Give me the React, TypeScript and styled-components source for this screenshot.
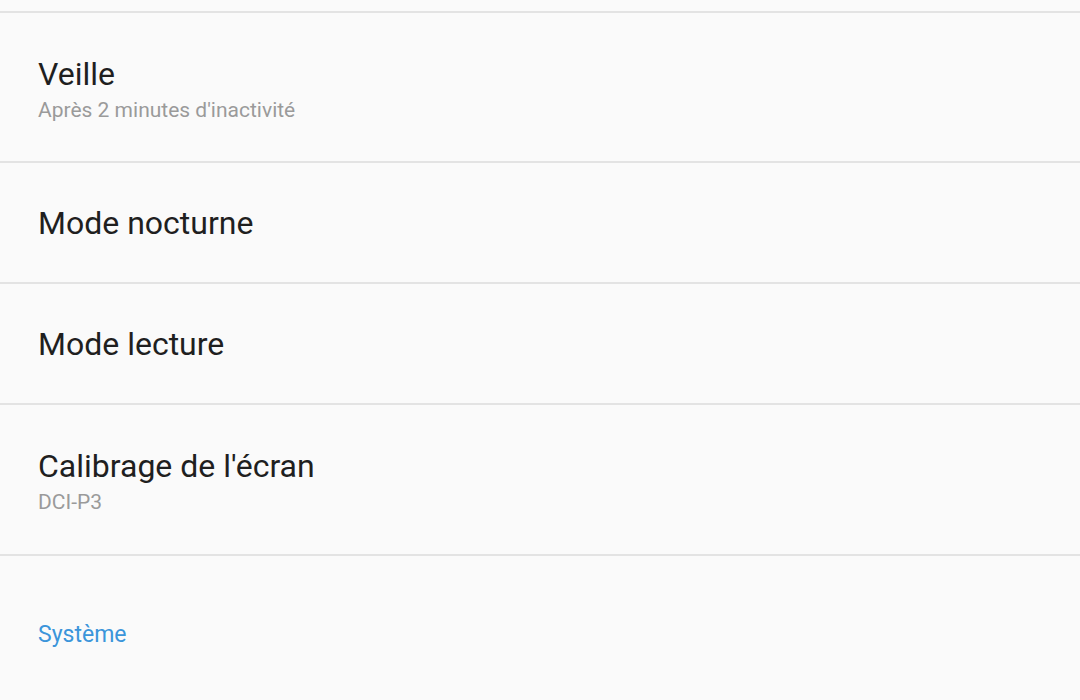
import React from "react";
import styled, { createGlobalStyle } from "styled-components";

const Global = createGlobalStyle`
  html, body {
    margin: 0;
    padding: 0;
    background: #fafafa;
  }
  body {
    font-family: Roboto, "Noto Sans", "Liberation Sans", sans-serif;
    -webkit-font-smoothing: antialiased;
  }
`;

const Page = styled.div`
  width: 1080px;
  height: 700px;
  overflow: hidden;
  background: #fafafa;
  display: flex;
  flex-direction: column;
`;

const TopSpacer = styled.div`
  height: 11px;
`;

const Divider = styled.div`
  height: 2px;
  background: #e3e3e3;
  flex-shrink: 0;
`;

const Row = styled.div<{ $h: number; $twoLine: boolean }>`
  height: ${(p) => p.$h}px;
  flex-shrink: 0;
  box-sizing: border-box;
  padding: ${(p) => (p.$twoLine ? "3px" : "1px")} 38px 0;
  display: flex;
  flex-direction: column;
  justify-content: center;
`;

const Title = styled.div`
  font-size: 32px;
  line-height: 38px;
  color: #1f1f1f;
`;

const Summary = styled.div`
  margin-top: 4px;
  font-size: 21px;
  line-height: 26px;
  color: #9a9a9a;
`;

const SectionHeader = styled.div`
  padding: 65px 38px 0;
  font-size: 23px;
  line-height: 28px;
  color: #3b95da;
`;

const items: { title: string; summary?: string; h: number }[] = [
  { title: "Veille", summary: "Après 2 minutes d'inactivité", h: 148 },
  { title: "Mode nocturne", h: 119 },
  { title: "Mode lecture", h: 119 },
  { title: "Calibrage de l'écran", summary: "DCI-P3", h: 149 },
];

export default function App() {
  return (
    <Page>
      <Global />
      <TopSpacer />
      <Divider />
      {items.map((it) => (
        <React.Fragment key={it.title}>
          <Row $h={it.h} $twoLine={!!it.summary}>
            <Title>{it.title}</Title>
            {it.summary && <Summary>{it.summary}</Summary>}
          </Row>
          <Divider />
        </React.Fragment>
      ))}
      <SectionHeader>Système</SectionHeader>
    </Page>
  );
}
